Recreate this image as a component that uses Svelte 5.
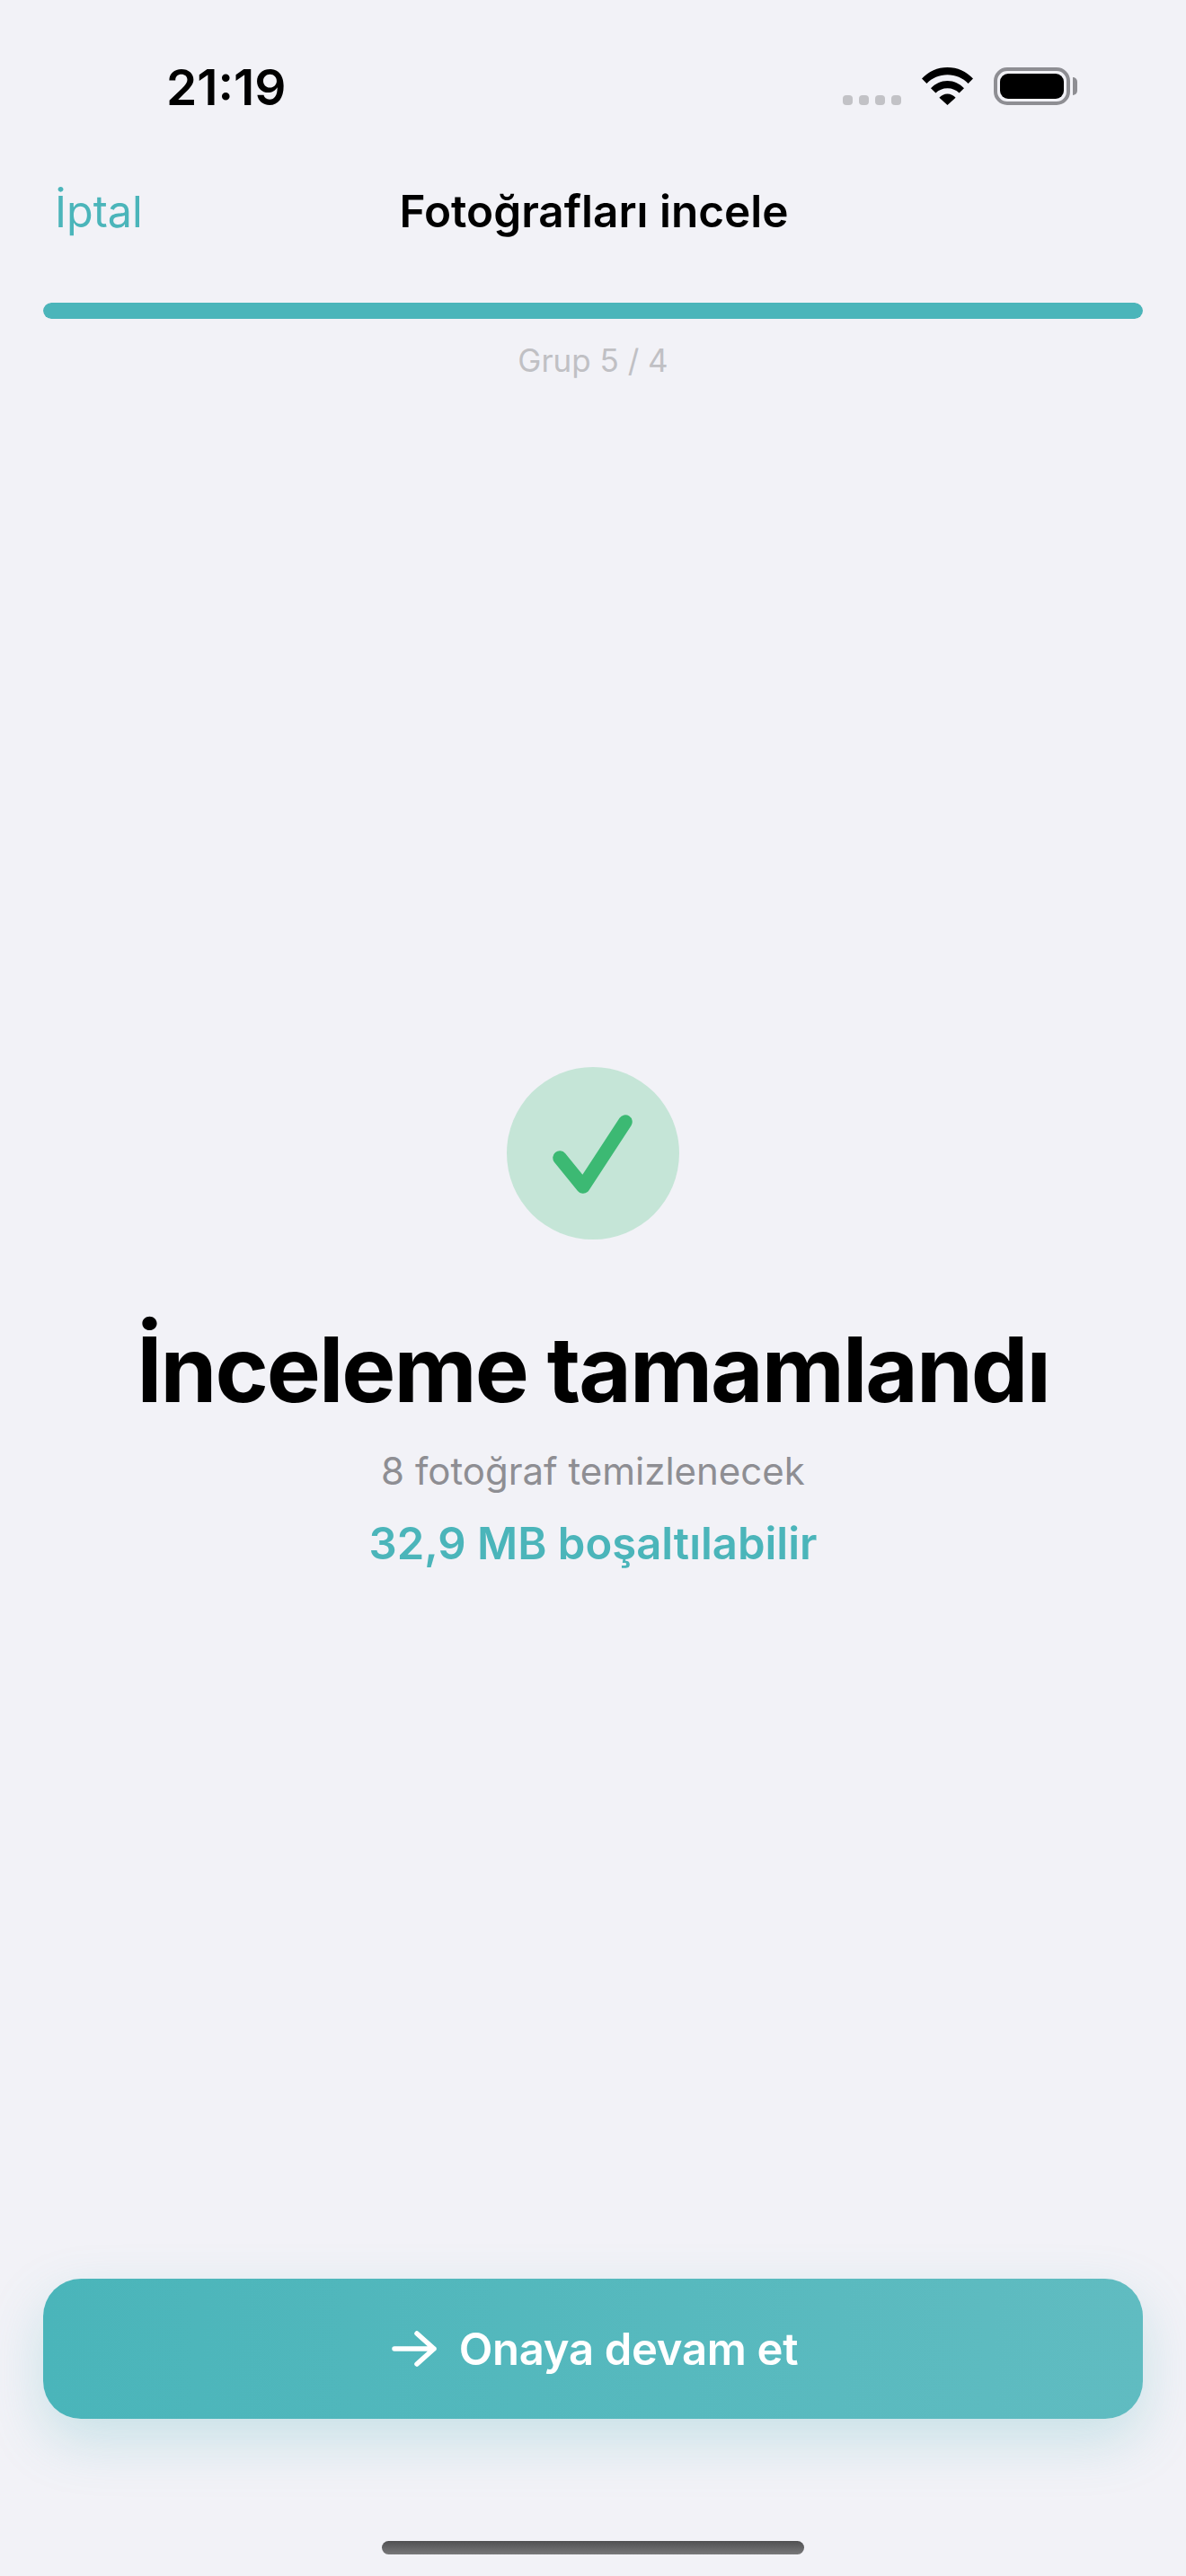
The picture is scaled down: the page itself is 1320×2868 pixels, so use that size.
<script>
  const title = 'Fotoğrafları incele';
</script>

<div class="page">
  <header class="status">
    <span class="time">21:19</span>
    <div class="indicators">
      <div class="dots"><i></i><i></i><i></i><i></i></div>
      <svg class="wifi" width="57" height="42" viewBox="0 0 57 42" aria-hidden="true">
        <path d="M0 12.5C7.5 4.6 17.4 0 28.5 0S49.5 4.6 57 12.5L51.6 18C45.6 11.9 37.5 8.3 28.5 8.3S11.4 11.9 5.4 18Z"/>
        <path d="M10 23.2C14.8 18.2 21.3 15 28.5 15S42.2 18.2 47 23.2L41.6 28.6C38.2 25.2 33.6 23.2 28.5 23.2S18.8 25.2 15.4 28.6Z"/>
        <path d="M19.4 33.8C21.7 31 24.9 29.4 28.5 29.4S35.3 31 37.6 33.8L28.5 42Z"/>
      </svg>
      <div class="battery"><div class="cell"><div class="charge"></div></div><div class="nub"></div></div>
    </div>
  </header>

  <nav class="nav">
    <span class="cancel">İptal</span>
    <h1 class="title">{title}</h1>
  </nav>

  <div class="progress"><div class="fill"></div></div>
  <p class="group">Grup 5 / 4</p>

  <main class="done">
    <div class="badge">
      <svg width="192" height="192" viewBox="0 0 192 192" aria-hidden="true">
        <path d="M59 101L85 133L132 61" fill="none" stroke="#3cb973" stroke-width="15.5" stroke-linecap="round" stroke-linejoin="round"/>
      </svg>
    </div>
    <h2 class="heading">İnceleme tamamlandı</h2>
    <p class="count">8 fotoğraf temizlenecek</p>
    <p class="freed">32,9 MB boşaltılabilir</p>
  </main>

  <button class="cta" type="button">
    <svg width="50" height="42" viewBox="0 0 50 42" aria-hidden="true">
      <path d="M3 21H47M28 4L47 21L28 38" fill="none" stroke="#fff" stroke-width="5.5" stroke-linecap="round" stroke-linejoin="round"/>
    </svg>
    <span>Onaya devam et</span>
  </button>

  <div class="home"></div>
</div>

<style>
  :global(body) {
    margin: 0;
    background: #f2f2f7;
  }

  .page {
    width: 1320px;
    height: 2868px;
    display: flex;
    flex-direction: column;
    background: #f2f2f7;
    font-family: Inter, "Noto Sans", sans-serif;
    color: #000;
    overflow: hidden;
  }

  .status {
    height: 190px;
    flex: none;
    box-sizing: border-box;
    padding: 62px 121px 0 185px;
    display: flex;
    justify-content: space-between;
    align-items: flex-start;
  }

  .time {
    font-size: 55px;
    line-height: 70px;
    font-weight: 600;
  }

  .indicators {
    display: flex;
    align-items: flex-end;
    padding-top: 13px;
  }

  .dots {
    display: flex;
    gap: 6.5px;
    margin-right: 23px;
  }

  .dots i {
    width: 11.5px;
    height: 11.5px;
    border-radius: 4px;
    background: #c2c2c6;
  }

  .wifi {
    display: block;
    margin-right: 23px;
  }

  .battery {
    display: flex;
    align-items: center;
    gap: 3px;
  }

  .cell {
    box-sizing: border-box;
    width: 85px;
    height: 42px;
    border: 4px solid #8e8e93;
    border-radius: 15px;
    padding: 3px;
  }

  .charge {
    height: 100%;
    background: #000;
    border-radius: 9px;
  }

  .nub {
    width: 5px;
    height: 20px;
    background: #8e8e93;
    border-radius: 0 5px 5px 0;
  }

  .nav {
    height: 90px;
    flex: none;
    position: relative;
    display: flex;
    align-items: center;
    justify-content: center;
  }

  .cancel {
    position: absolute;
    left: 61px;
    top: 50%;
    transform: translateY(-50%);
    font-size: 48.5px;
    color: #4bb5ba;
  }

  .title {
    margin: 0 0 0 2px;
    font-size: 49.5px;
    font-weight: 600;
  }

  .progress {
    flex: none;
    margin: 57px 48px 0;
    height: 18px;
    border-radius: 9px;
    background: #e0e0e5;
    overflow: hidden;
  }

  .fill {
    width: 100%;
    height: 100%;
    background: #4bb5ba;
    border-radius: 9px;
  }

  .group {
    flex: none;
    margin: 25px 0 0;
    text-align: center;
    font-size: 35px;
    line-height: 42px;
    color: #c0c0c4;
  }

  .done {
    flex: 1;
    display: flex;
    flex-direction: column;
    align-items: center;
    padding-top: 766px;
  }

  .badge {
    width: 192px;
    height: 192px;
    border-radius: 50%;
    background: #c5e5d7;
  }

  .badge svg {
    display: block;
  }

  .heading {
    margin: 82px 0 0;
    font-size: 101px;
    line-height: 124px;
    font-weight: 700;
    letter-spacing: -2px;
    white-space: nowrap;
  }

  .count {
    margin: 24px 0 0;
    font-size: 42px;
    line-height: 56px;
    color: #8e8e93;
  }

  .freed {
    margin: 23px 0 0;
    font-size: 49px;
    line-height: 60px;
    font-weight: 600;
    color: #4bb5ba;
  }

  .cta {
    flex: none;
    margin: 0 48px;
    padding: 0 0 0 4px;
    height: 156px;
    border: 0;
    border-radius: 42px;
    background: linear-gradient(90deg, #4ab5ba, #60bcc1);
    box-shadow: 0 24px 60px rgba(75, 181, 186, 0.25);
    color: #fff;
    font: 600 49px Inter, "Noto Sans", sans-serif;
    letter-spacing: -0.3px;
    display: flex;
    align-items: center;
    justify-content: center;
    gap: 25px;
  }

  .cta svg {
    display: block;
  }

  .home {
    flex: none;
    margin: 136px auto 24px;
    width: 470px;
    height: 15px;
    border-radius: 8px;
    background: linear-gradient(180deg, #505052, #78787a);
  }
</style>
